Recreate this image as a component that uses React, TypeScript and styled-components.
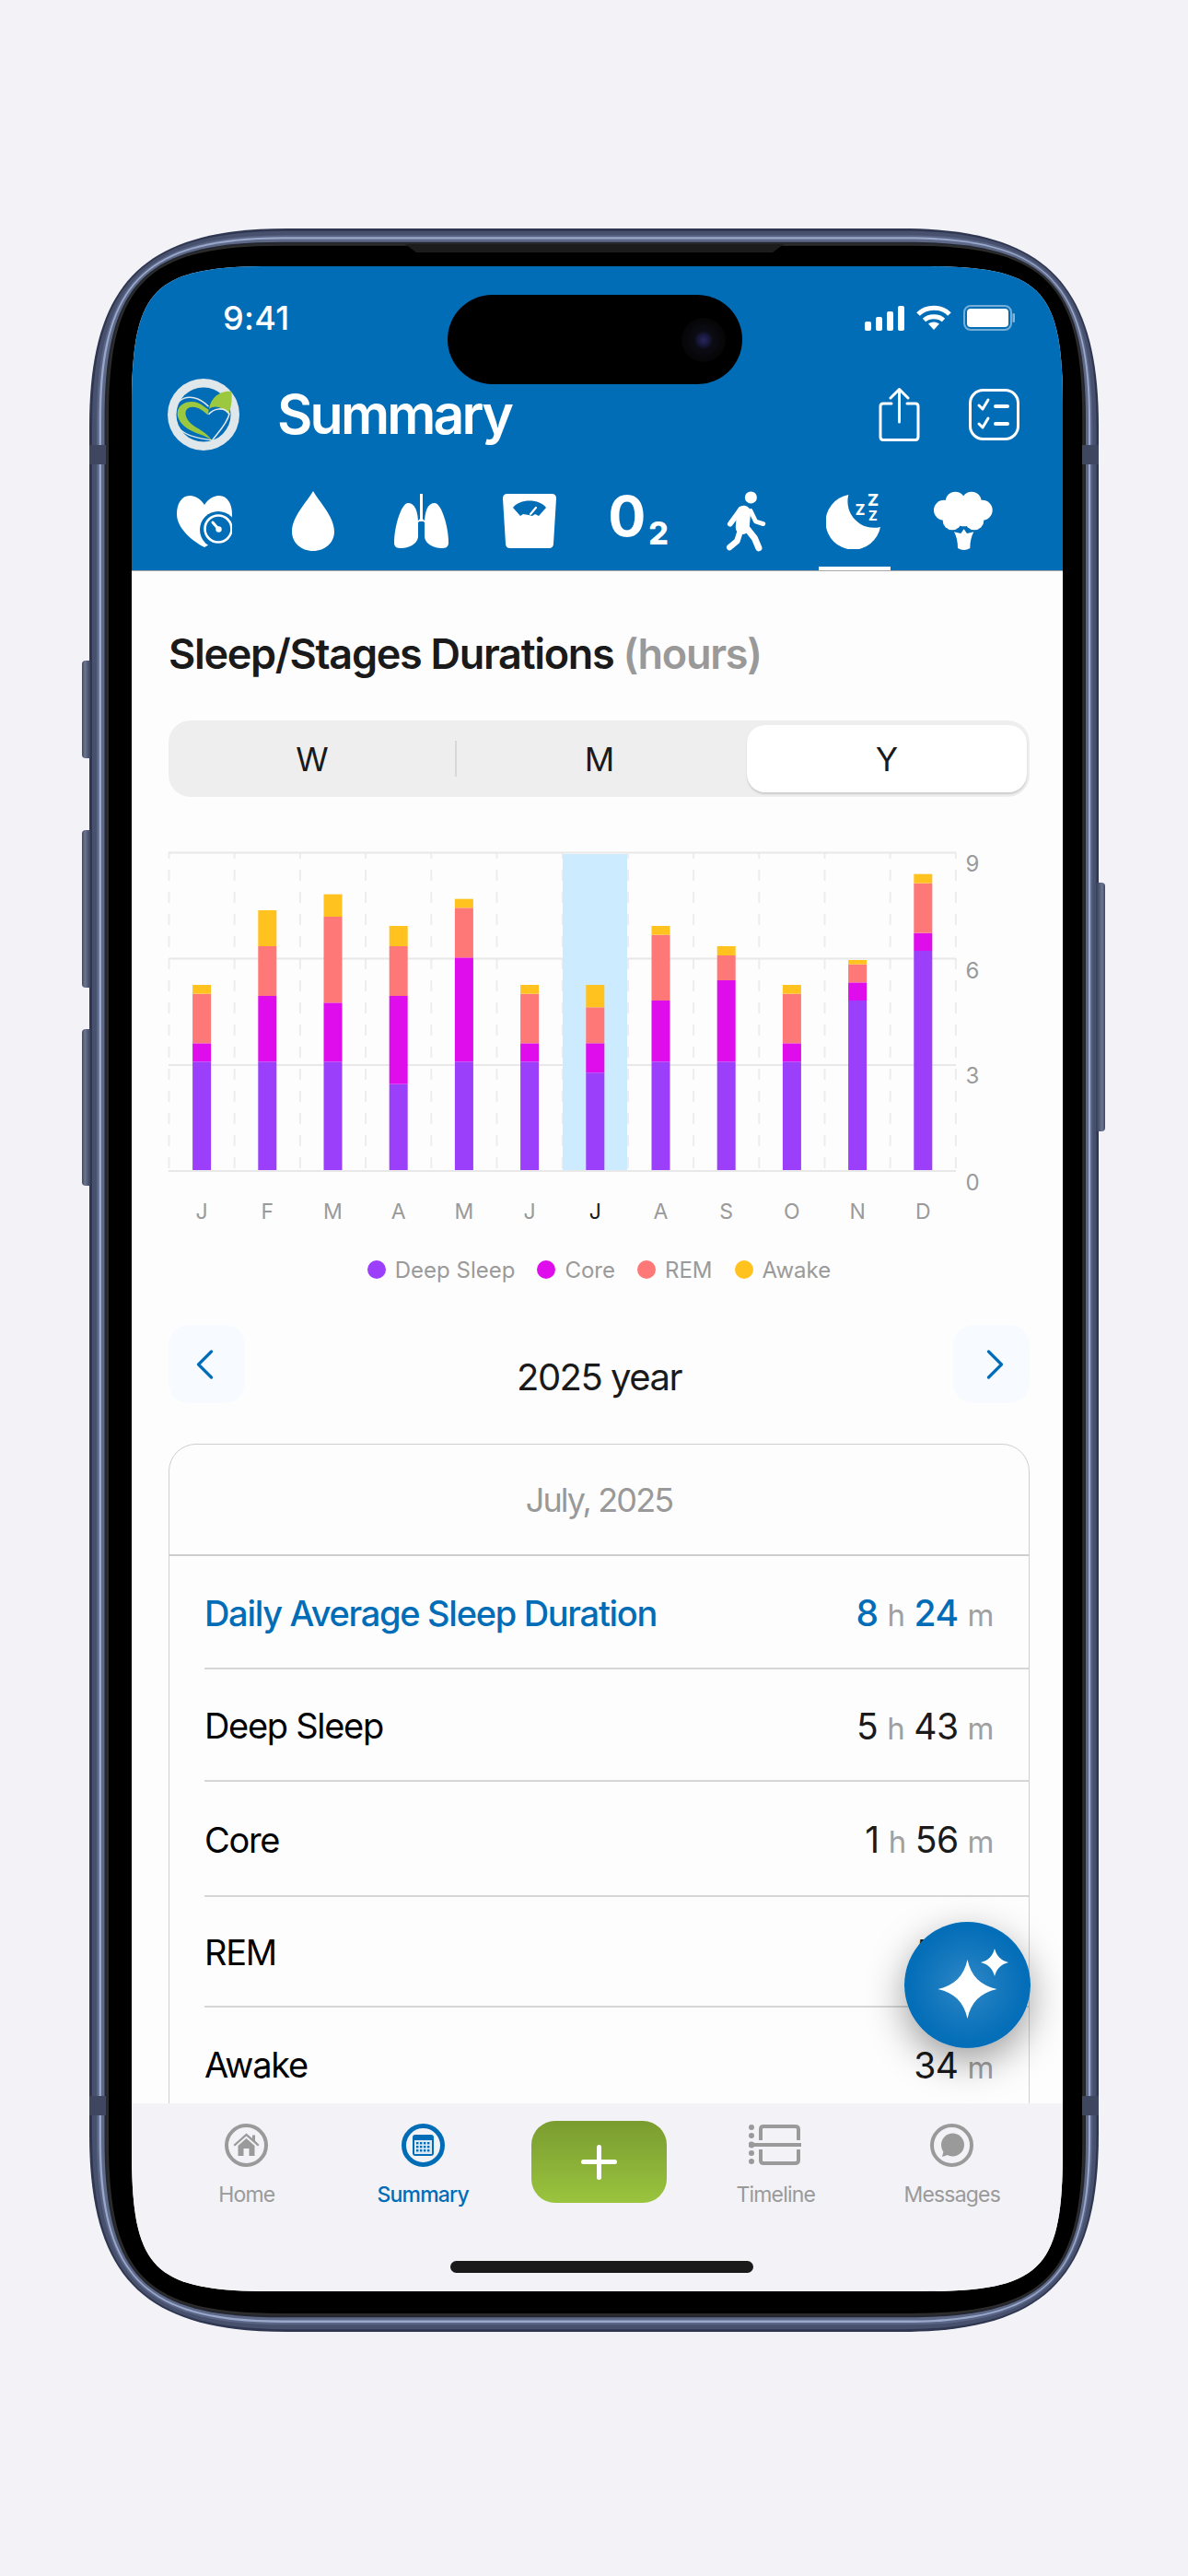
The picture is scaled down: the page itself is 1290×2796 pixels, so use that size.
import React from "react";
import styled, { createGlobalStyle } from "styled-components";

const BLUE = "#026DB7";
const FONT = `Inter, "Noto Sans", "Liberation Sans", sans-serif`;

const GlobalStyle = createGlobalStyle`
  html, body { margin: 0; padding: 0; background: #F2F2F7; }
  body { font-family: ${FONT}; }
  * { box-sizing: border-box; }
`;

function squircle(x: number, y: number, r: number, b: number, R: number, k: number) {
  const c = R * (1 - k);
  return `M${x} ${y + R}C${x} ${y + c} ${x + c} ${y} ${x + R} ${y}L${r - R} ${y}C${r - c} ${y} ${r} ${y + c} ${r} ${y + R}L${r} ${b - R}C${r} ${b - c} ${r - c} ${b} ${r - R} ${b}L${x + R} ${b}C${x + c} ${b} ${x} ${b - c} ${x} ${b - R}Z`;
}

const W = 1096, H = 2283;
const ring = (inset: number) => {
  const t = inset / 46;
  return squircle(46 * t, 41 * t, W - 39 * t, H - 44 * t, 215 - 62 * t, 0.726 + 0.124 * t);
};
const SCREEN_W = 1011, SCREEN_H = 2198;
const screenClip = squircle(0, 0, SCREEN_W, SCREEN_H, 153, 0.85);

const Page = styled.div`
  width: 1290px;
  height: 2796px;
  padding: 248px 0 0 97px;
  background: #F2F2F7;
  overflow: hidden;
`;
const Phone = styled.div`
  position: relative;
  width: ${W}px;
  height: ${H}px;
  padding: 41px 39px 44px 46px;
`;
const FrameArt = styled.svg`
  position: absolute;
  inset: 0;
`;
const SideButton = styled.div<{ $side: "left" | "right"; $top: number; $h: number }>`
  position: absolute;
  top: ${(p) => p.$top}px;
  height: ${(p) => p.$h}px;
  width: 9px;
  ${(p) => (p.$side === "left" ? "left: -8px; border-radius: 4px 0 0 4px;" : "right: -7px; border-radius: 0 4px 4px 0;")}
  background: linear-gradient(${(p) => (p.$side === "left" ? "90deg" : "270deg")}, #3f4762 0, #6c7691 35%, #3a425c 100%);
`;
const Band = styled.div<{ $side: "left" | "right"; $top: number }>`
  position: absolute;
  top: ${(p) => p.$top}px;
  ${(p) => (p.$side === "left" ? "left: 0;" : "right: 0;")}
  width: 18px;
  height: 21px;
  background: #3f4660;
`;
const Screen = styled.div`
  position: relative;
  width: ${SCREEN_W}px;
  height: ${SCREEN_H}px;
  clip-path: path("${screenClip}");
  background: #FDFDFD;
  display: flex;
  flex-direction: column;
`;
const Island = styled.div`
  position: absolute;
  left: 343px;
  top: 31px;
  width: 320px;
  height: 97px;
  border-radius: 49px;
  background: #000;
  display: flex;
  align-items: center;
  justify-content: flex-end;
  padding-right: 18px;
  z-index: 3;
`;
const Lens = styled.div`
  width: 48px;
  height: 48px;
  border-radius: 50%;
  background: radial-gradient(circle, #26265c 0, #17173a 18%, #0b0b14 30%, #070709 60%, #000 100%);
`;
const Header = styled.header`
  background: ${BLUE};
  flex: none;
  height: 330px;
  display: flex;
  flex-direction: column;
  box-shadow: 0 1px 0 #a9a9a9;
  z-index: 1;
`;
const StatusBar = styled.div`
  height: 40px;
  margin: 36px 0 46px;
  padding: 0 52px 0 99px;
  display: flex;
  align-items: center;
  justify-content: space-between;
`;
const Time = styled.span`
  color: #fff;
  font-size: 36px;
  font-weight: 500;
  letter-spacing: 0.3px;
`;
const StatusIcons = styled.div`
  display: flex;
  align-items: center;
  gap: 13px;
`;
const TitleRow = styled.div`
  height: 78px;
  padding: 0 47px 0 39px;
  display: flex;
  align-items: center;
  flex: none;
`;
const Title = styled.h1`
  margin: 0 0 0 41px;
  flex: 1;
  color: #fff;
  font-size: 59px;
  line-height: 78px;
  font-weight: 600;
  letter-spacing: -2.8px;
`;
const HeaderActions = styled.div`
  display: flex;
  align-items: center;
  gap: 53px;
`;
const TabRow = styled.nav`
  margin-top: 23px;
  height: 107px;
  padding-left: 20px;
  display: flex;
`;
const Tab = styled.div<{ $active?: boolean }>`
  position: relative;
  width: 117.7px;
  height: 107px;
  display: flex;
  align-items: center;
  justify-content: center;
  ${(p) =>
    p.$active &&
    `&::after { content: ""; position: absolute; left: 20px; right: 20px; bottom: 0; height: 4px; background: #fff; }`}
`;
const OxygenMark = styled.span`
  color: #fff;
  font-size: 61px;
  font-weight: 700;
  line-height: 1;
  display: flex;
  align-items: flex-start;
  margin: -5px 0 0 1px;
  sub {
    font-size: 34px;
    line-height: 1;
    font-weight: 800;
    margin: 32px 0 0 3px;
    vertical-align: baseline;
  }
`;
const MoonSvg = styled.svg`
  margin: 0 0 4px 5.7px;
`;
const Content = styled.main`
  flex: 1;
  min-height: 0;
  overflow: hidden;
  padding: 64px 36px 0 40px;
  background: #FDFDFD;
`;
const SectionTitle = styled.h2`
  margin: 0 0 45px;
  font-size: 45px;
  line-height: 54px;
  font-weight: 600;
  letter-spacing: -1.3px;
  color: #1a1a1a;
  white-space: nowrap;
`;
const SectionUnit = styled.span`
  color: #999;
`;
const Segments = styled.div`
  height: 83px;
  background: #EEEEEE;
  border-radius: 24px;
  display: grid;
  grid-template-columns: 312px 312px 1fr;
  padding: 5px 3px 5px 0;
`;
const Segment = styled.div<{ $active?: boolean; $divider?: boolean }>`
  position: relative;
  display: flex;
  align-items: center;
  justify-content: center;
  font-size: 36px;
  color: #1a1a1a;
  border-radius: 20px;
  ${(p) => p.$active && `margin-left: 4px; background: #fff; box-shadow: 0 2px 2px rgba(0,0,0,.14);`}
  ${(p) =>
    p.$divider &&
    `&::after { content: ""; position: absolute; right: -1px; top: 17px; bottom: 17px; width: 2px; background: #d8d8d8; }`}
`;
const ChartSvg = styled.svg`
  display: block;
  margin-top: 58px;
  overflow: visible;
`;
const AxisText = styled.text<{ $active?: boolean; $size: number }>`
  font-family: ${FONT};
  font-size: ${(p) => p.$size}px;
  fill: ${(p) => (p.$active ? "#1a1a1a" : "#9a9a9a")};
  text-anchor: middle;
  dominant-baseline: central;
`;
const Legend = styled.div`
  margin-top: 30px;
  height: 30px;
  display: flex;
  justify-content: center;
  gap: 24px;
`;
const LegendItem = styled.div`
  display: flex;
  align-items: center;
  gap: 10px;
  font-size: 24px;
  color: #9a9a9a;
`;
const Dot = styled.span<{ $color: string }>`
  width: 20px;
  height: 20px;
  border-radius: 50%;
  background: ${(p) => p.$color};
`;
const YearNav = styled.div`
  margin-top: 45px;
  height: 85px;
  display: flex;
  justify-content: space-between;
`;
const NavButton = styled.div<{ $dir: "l" | "r" }>`
  width: 83px;
  height: 85px;
  border-radius: 22px;
  background: #F7FBFF;
  display: flex;
  align-items: center;
  justify-content: center;
  ${(p) => (p.$dir === "l" ? "padding-right: 4px;" : "padding-left: 8px;")}
`;
const YearLabel = styled.div`
  align-self: flex-end;
  line-height: 60px;
  margin-bottom: -2px;
  font-size: 40px;
  letter-spacing: -1.5px;
  color: #1a1a1a;
`;
const Card = styled.section`
  margin-top: 44px;
  border: 1.5px solid #CFCFCF;
  border-radius: 30px;
  background: #FDFDFD;
`;
const CardHeader = styled.div`
  height: 120.5px;
  border-bottom: 2px solid #CFCFCF;
  display: flex;
  align-items: center;
  justify-content: center;
  padding-top: 2px;
  font-size: 36px;
  letter-spacing: -1.9px;
  color: #999;
`;
const Row = styled.div<{ $h: number }>`
  height: ${(p) => p.$h}px;
  margin-left: 38px;
  padding: 3px 38px 0 0;
  border-bottom: 2px solid #D6D6D6;
  display: flex;
  align-items: center;
  justify-content: space-between;
`;
const LastRow = styled(Row)`
  align-items: flex-start;
  padding-top: 39px;
  border-bottom: 0;
`;
const RowLabel = styled.span<{ $accent?: boolean }>`
  font-size: 38px;
  letter-spacing: -1.3px;
  font-weight: ${(p) => (p.$accent ? 500 : 400)};
  color: ${(p) => (p.$accent ? BLUE : "#000")};
`;
const RowValue = styled.span<{ $accent?: boolean }>`
  font-size: 39px;
  letter-spacing: -0.5px;
  font-weight: ${(p) => (p.$accent ? 500 : 400)};
  color: ${(p) => (p.$accent ? BLUE : "#1a1a1a")};
  display: flex;
  align-items: baseline;
`;
const Unit = styled.span`
  font-size: 33px;
  font-weight: 400;
  color: #a0a0a0;
  margin: 0 10px 0 10px;
  &:last-child { margin-right: 0; }
`;
const Fab = styled.button`
  position: absolute;
  right: 35px;
  bottom: 264px;
  width: 137px;
  height: 137px;
  border: 0;
  padding: 0;
  border-radius: 50%;
  background: radial-gradient(circle at 50% 50%, #3189C8 0, #1A7BBF 30%, #046EB8 65%, ${BLUE} 100%);
  box-shadow: 0 14px 42px rgba(0, 0, 0, 0.38);
  display: flex;
  align-items: center;
  justify-content: center;
  z-index: 2;
`;
const Footer = styled.footer`
  flex: none;
  height: 204px;
  background: #F2F2F7;
  display: flex;
  flex-direction: column;
  justify-content: space-between;
  padding: 19px 0 20px;
  z-index: 1;
`;
const FooterTabs = styled.div`
  display: grid;
  grid-template-columns: repeat(5, 191.5px);
  padding-left: 29px;
`;
const FooterTab = styled.div<{ $active?: boolean }>`
  display: flex;
  flex-direction: column;
  align-items: center;
  padding-top: 3px;
  font-size: 23px;
  letter-spacing: -0.8px;
  font-weight: ${(p) => (p.$active ? 500 : 400)};
  color: ${(p) => (p.$active ? BLUE : "#9a9a9a")};
`;
const FooterLabel = styled.span`
  margin-top: 15px;
  line-height: 30px;
`;
const AddButton = styled.div`
  justify-self: center;
  width: 147px;
  height: 89px;
  border-radius: 26px;
  background: linear-gradient(180deg, #7A9C30 0%, #9AC43E 100%);
  display: flex;
  align-items: center;
  justify-content: center;
`;
const PlusMark = styled.div`
  position: relative;
  width: 39px;
  height: 38px;
  &::before, &::after {
    content: "";
    position: absolute;
    background: #fff;
    border-radius: 3px;
  }
  &::before { left: 0; right: 0; top: 16.5px; height: 5px; }
  &::after { top: 0; bottom: 0; left: 17px; width: 5px; }
`;
const HomeIndicator = styled.div`
  align-self: center;
  margin-left: 10px;
  width: 329px;
  height: 13px;
  border-radius: 7px;
  background: #1a1a1a;
`;

const COLORS = { deep: "#9B3FFB", core: "#DF0CEC", rem: "#FF7878", awake: "#FFC21F" };
const Z0 = 1270;
const raw: [number, number, number, number][] = [
  [757, 697, 536, 507],
  [757, 543, 381, 264],
  [757, 565, 285, 212],
  [830, 543, 381, 315],
  [757, 418, 256, 227],
  [757, 697, 536, 507],
  [793, 697, 580, 507],
  [757, 558, 344, 315],
  [757, 492, 411, 381],
  [757, 697, 536, 507],
  [558, 499, 440, 426],
  [396, 338, 176, 146],
];
const MONTHS = ["J", "F", "M", "A", "M", "J", "J", "A", "S", "O", "N", "D"];
const X0 = 183.5;
const STEP = 71.2;
const toY = (z: number) => 900 + z / 3;

const Chart = () => (
  <ChartSvg width={935} height={410} viewBox="183 923 935 410" role="img">
    {Array.from({ length: 13 }).map((_, i) => (
      <line key={i} x1={X0 + i * STEP} x2={X0 + i * STEP} y1={926} y2={1270} stroke="#EDEDED" strokeWidth={2} strokeDasharray="12 12" strokeDashoffset={6} />
    ))}
    {[925.5, 1040.5, 1156, 1271].map((y) => (
      <line key={y} x1={183} x2={1038} y1={y} y2={y} stroke="#E8E8E8" strokeWidth={2} />
    ))}
    <rect x={611} y={927} width={70} height={343} fill="#CDEBFF" />
    {raw.map((b, i) => {
      const cx = X0 + (i + 0.5) * STEP;
      const x = cx - 10;
      const [d, c, r, a] = b.map(toY);
      return (
        <g key={i}>
          <rect x={x} y={d} width={20} height={Z0 - d} fill={COLORS.deep} />
          <rect x={x} y={c} width={20} height={d - c} fill={COLORS.core} />
          <rect x={x} y={r} width={20} height={c - r} fill={COLORS.rem} />
          <rect x={x} y={a} width={20} height={r - a} fill={COLORS.awake} />
          <AxisText x={cx} y={1315} $size={23} $active={i === 6}>{MONTHS[i]}</AxisText>
        </g>
      );
    })}
    {[["9", 937], ["6", 1053], ["3", 1167], ["0", 1283]].map(([t, y]) => (
      <AxisText key={t} x={1056} y={y as number} $size={24}>{t}</AxisText>
    ))}
  </ChartSvg>
);

const Logo = () => (
  <svg width={78} height={78} viewBox="306 543 235 235">
    <circle cx={423.5} cy={660.5} r={117.5} fill="#DFE7EA" />
    <circle cx={423.5} cy={660.5} r={89} fill={BLUE} />
    <path d="M338 655C340 625 375 612 405 622C420 628 432 640 441 645L437 662C420 645 395 628 372 640C358 650 365 675 385 692C400 705 430 715 452 745C425 725 390 722 365 702C350 690 337 672 338 655Z" fill="#9BC83F" />
    <path d="M442 642C445 610 475 580 515 585C518 610 514 640 505 660C490 640 465 625 442 642Z" fill="#9BC83F" />
    <path d="M342 618C372 592 412 605 440 634" fill="none" stroke="#DFE7EA" strokeWidth={5} />
    <path d="M440 660C455 642 490 632 508 658C500 692 470 720 452 745" fill="none" stroke="#DFE7EA" strokeWidth={5} />
    <path d="M340 700C360 730 400 735 452 745" fill="none" stroke="#DFE7EA" strokeWidth={4} />
  </svg>
);

const StatusGlyphs = () => (
  <StatusIcons>
    <svg width={43} height={27} viewBox="0 0 43 27" fill="#fff">
      <rect x={0} y={17} width={7} height={10} rx={2} />
      <rect x={12} y={12} width={7} height={15} rx={2} />
      <rect x={24} y={6} width={7} height={21} rx={2} />
      <rect x={36} y={0} width={7} height={27} rx={2} />
    </svg>
    <svg width={38} height={28} viewBox="0 0 38 28" fill="none" stroke="#fff" strokeWidth={5}>
      <path d="M2 10C11 1 27 1 36 10" />
      <path d="M8.5 16.5C14 11.5 24 11.5 29.5 16.5" />
      <path d="M19 27L13 20.5C16.5 17.8 21.5 17.8 25 20.5Z" fill="#fff" stroke="none" />
    </svg>
    <svg width={56} height={28} viewBox="0 0 56 28">
      <rect x={1} y={1} width={51} height={26} rx={7} fill="none" stroke="#fff" strokeOpacity={0.45} strokeWidth={2} />
      <rect x={4} y={4} width={45} height={20} rx={4} fill="#fff" />
      <rect x={53.5} y={9} width={2.5} height={10} rx={1.2} fill="#fff" fillOpacity={0.5} />
    </svg>
  </StatusIcons>
);

const ShareIcon = () => (
  <svg width={45} height={58} viewBox="0 0 45 58" fill="none" stroke="#fff" strokeWidth={3} strokeLinecap="round" strokeLinejoin="round">
    <path d="M14 17H5Q2 17 2 20V53Q2 56.5 5 56.5H40Q43 56.5 43 53V20Q43 17 40 17H31" />
    <path d="M22.5 37V2M13 11L22.5 1.5L32 11" />
  </svg>
);
const ChecklistIcon = () => (
  <svg width={55} height={56} viewBox="0 0 55 56" fill="none" stroke="#fff" strokeWidth={3} strokeLinecap="round" strokeLinejoin="round">
    <rect x={1.5} y={1.5} width={52} height={53} rx={14} />
    <path d="M11 18L15 22L21 12" />
    <path d="M11 38L15 42L21 32" />
    <path d="M29 19H42M29 38H42" strokeWidth={4} />
  </svg>
);

const HeartGauge = () => (
  <svg width={60} height={56} viewBox="0 0 60 56">
    <path d="M30 10C25 2 18 0 14 0C5 0 0 9 0 20C0 36 18 50 30 56C42 50 60 36 60 20C60 9 55 0 46 0C42 0 35 2 30 10Z" fill="#fff" />
    <circle cx={45} cy={37} r={20} fill={BLUE} />
    <circle cx={45} cy={36} r={14.5} fill="none" stroke="#fff" strokeWidth={2.6} />
    <path d="M39 29L45 36" stroke="#fff" strokeWidth={3} strokeLinecap="round" />
    <circle cx={45.5} cy={36.5} r={3.2} fill="#fff" />
  </svg>
);
const Drop = () => (
  <svg width={46} height={65} viewBox="0 0 46 65">
    <path d="M23 0C30 12 46 28 46 44C46 56 36 65 23 65C10 65 0 56 0 44C0 28 16 12 23 0Z" fill="#fff" />
  </svg>
);
const Lungs = () => (
  <svg width={59} height={59} viewBox="0 0 59 59" fill="#fff">
    <path d="M15 10C8 10 0 35 0 53C0 58 3 59 8 59C15 59 25 55 26 47V32C26 18 22 10 15 10Z" />
    <path d="M44 10C51 10 59 35 59 53C59 58 56 59 51 59C44 59 34 55 33 47V32C33 18 37 10 44 10Z" />
    <rect x={28} y={0} width={3} height={30} />
    <path d="M26 29L29.5 26L33 29V31L29.5 28.5L26 31Z" />
  </svg>
);
const ScaleIcon = () => (
  <svg width={58} height={59} viewBox="0 0 58 59">
    <path d="M5 0H53Q58 0 58 5L55 54Q55 59 50 59H8Q3 59 3 54L0 5Q0 0 5 0Z" fill="#fff" />
    <path d="M11 15C18 5 40 5 47 15L39 24L35 22L32 24L28 23L22 22L19 24Z" fill={BLUE} />
    <path d="M30 22L36 15" stroke="#fff" strokeWidth={2.2} strokeLinecap="round" />
  </svg>
);
const Walker = () => (
  <svg width={44} height={68} viewBox="262 128 135 204" fill="none" stroke="#fff" strokeLinecap="round" strokeLinejoin="round">
    <circle cx={346} cy={150} r={20} fill="#fff" stroke="none" />
    <path d="M322 200L318 250" strokeWidth={46} />
    <path d="M312 190L277 238" strokeWidth={18} />
    <path d="M345 195L362 230L387 238" strokeWidth={15} />
    <path d="M330 250L358 285L372 318" strokeWidth={22} />
    <path d="M308 270L300 295L275 316" strokeWidth={20} />
  </svg>
);
const Moon = () => (
  <MoonSvg width={66.7} height={65} viewBox="595 122 200 195">
    <path d="M668 140A90 90 0 1 0 772 245A86 86 0 0 1 668 140Z" fill="#fff" />
    <text x={730} y={177} fontFamily={FONT} fontWeight={800} fontSize={54} fill="#fff">Z</text>
    <text x={690} y={205} fontFamily={FONT} fontWeight={800} fontSize={47} fill="#fff">Z</text>
    <text x={733} y={225} fontFamily={FONT} fontWeight={800} fontSize={43} fill="#fff">Z</text>
  </MoonSvg>
);
const Broccoli = () => (
  <svg width={64} height={65} viewBox="942 130 192 195" fill="#fff">
    <circle cx={1012} cy={164} r={32} />
    <circle cx={1065} cy={164} r={32} />
    <circle cx={975} cy={192} r={33} />
    <circle cx={1100} cy={192} r={33} />
    <circle cx={1002} cy={226} r={31} />
    <circle cx={1040} cy={210} r={35} />
    <circle cx={1074} cy={226} r={31} />
    <path d="M1008 263L1030 268L1040 254L1050 268L1072 263Q1060 285 1060 316Q1040 328 1020 316Q1020 285 1008 263Z" />
  </svg>
);
const Chevron = ({ dir }: { dir: "l" | "r" }) => (
  <svg width={19} height={32} viewBox="0 0 19 32" fill="none" stroke={BLUE} strokeWidth={3.2} strokeLinecap="round" strokeLinejoin="round">
    <path d={dir === "l" ? "M16.5 2L2.5 16L16.5 30" : "M2.5 2L16.5 16L2.5 30"} />
  </svg>
);
const Sparkles = () => (
  <svg width={137} height={137} viewBox="0 0 137 137" fill="#fff">
    <path transform="translate(68.5 73)" d="M0 -32C4 -14 14 -4 32 0C14 4 4 14 0 32C-4 14 -14 4 -32 0C-14 -4 -4 -14 0 -32Z" />
    <path transform="translate(98 44)" d="M0 -15C2 -7 7 -2 15 0C7 2 2 7 0 15C-2 7 -7 2 -15 0C-7 -2 -2 -7 0 -15Z" />
  </svg>
);
const HomeGlyph = () => (
  <svg width={47} height={47} viewBox="0 0 47 47">
    <circle cx={23.5} cy={23.5} r={21.5} fill="none" stroke="#9a9a9a" strokeWidth={4} />
    <path d="M9.5 23L23.5 10.5L30 16V12.5H33V18.5L37.5 23L36 24.5L23.5 13.5L11 24.5Z" fill="#9a9a9a" />
    <path d="M14.5 24L23.5 16L32.5 24V35H26.5V27H20.5V35H14.5Z" fill="#9a9a9a" />
  </svg>
);
const SummaryGlyph = () => (
  <svg width={47} height={47} viewBox="0 0 47 47">
    <circle cx={23.5} cy={23.5} r={21} fill="none" stroke={BLUE} strokeWidth={5} />
    <rect x={12} y={12} width={23} height={23} rx={3} fill={BLUE} />
    <rect x={14} y={18} width={19} height={15} fill="#DCE9F4" />
    {[0, 1, 2].map((r) =>
      [0, 1, 2, 3].map((c) => (
        <rect key={`${r}${c}`} x={16 + c * 4} y={20 + r * 4} width={2.4} height={2.4} fill={BLUE} />
      ))
    )}
  </svg>
);
const TimelineGlyph = () => (
  <svg width={58} height={47} viewBox="0 0 58 47" fill="none" stroke="#9a9a9a" strokeWidth={4}>
    <g fill="#9a9a9a" stroke="none">
      <circle cx={3} cy={4} r={3} />
      <circle cx={3} cy={13} r={3} />
      <circle cx={3} cy={32} r={3} />
      <circle cx={3} cy={41} r={3} />
      <circle cx={3} cy={23} r={3.4} />
    </g>
    <path d="M13 18V6Q13 3 16 3H50Q54 3 54 6V18" />
    <path d="M13 28V40Q13 43 16 43H50Q54 43 54 40V28" />
    <path d="M3 23H57" />
  </svg>
);
const MessageGlyph = () => (
  <svg width={47} height={47} viewBox="0 0 47 47">
    <circle cx={23.5} cy={23.5} r={21.5} fill="none" stroke="#9a9a9a" strokeWidth={4} />
    <circle cx={24.5} cy={23} r={12.5} fill="#9a9a9a" />
    <path d="M15 28L13 36L22 33Z" fill="#9a9a9a" />
  </svg>
);

const RING_STOPS: [number, string][] = [
  [0, "#2F3650"],
  [3, "#47516E"],
  [8, "#5A6585"],
  [10.5, "#9AA8CC"],
  [13, "#5E6988"],
  [16.5, "#23262F"],
  [18.5, "#2C2C2C"],
  [21, "#000000"],
];

const ROWS = [
  { label: "Daily Average Sleep Duration", hr: "8", m: "24", accent: true, height: 123 },
  { label: "Deep Sleep", hr: "5", m: "43", height: 122 },
  { label: "Core", hr: "1", m: "56", height: 125 },
  { label: "REM", m: "55", height: 120 },
];

const Value = ({ hr, m, accent }: { hr?: string; m: string; accent?: boolean }) => (
  <RowValue $accent={accent}>
    {hr && <>{hr}<Unit>h</Unit></>}
    {m}<Unit>m</Unit>
  </RowValue>
);

export default function App() {
  return (
    <Page>
      <GlobalStyle />
      <Phone>
        <FrameArt width={W} height={H} viewBox={`0 0 ${W} ${H}`}>
          {RING_STOPS.map(([inset, color]) => (
            <path key={inset} d={ring(inset)} fill={color} />
          ))}
          <path d="M343 17H754L742 26H355Z" fill="#1C1C1C" />
        </FrameArt>
        <SideButton $side="left" $top={469} $h={106} />
        <SideButton $side="left" $top={653} $h={171} />
        <SideButton $side="left" $top={869} $h={170} />
        <SideButton $side="right" $top={710} $h={270} />
        <Band $side="left" $top={235} />
        <Band $side="right" $top={235} />
        <Band $side="left" $top={2027} />
        <Band $side="right" $top={2027} />
        <Screen>
          <Header>
            <StatusBar>
              <Time>9:41</Time>
              <StatusGlyphs />
            </StatusBar>
            <TitleRow>
              <Logo />
              <Title>Summary</Title>
              <HeaderActions>
                <ShareIcon />
                <ChecklistIcon />
              </HeaderActions>
            </TitleRow>
            <TabRow>
              <Tab><HeartGauge /></Tab>
              <Tab><Drop /></Tab>
              <Tab><Lungs /></Tab>
              <Tab><ScaleIcon /></Tab>
              <Tab><OxygenMark>0<sub>2</sub></OxygenMark></Tab>
              <Tab><Walker /></Tab>
              <Tab $active><Moon /></Tab>
              <Tab><Broccoli /></Tab>
            </TabRow>
          </Header>
          <Content>
            <SectionTitle>
              Sleep/Stages Durations <SectionUnit>(hours)</SectionUnit>
            </SectionTitle>
            <Segments>
              <Segment $divider>W</Segment>
              <Segment>M</Segment>
              <Segment $active>Y</Segment>
            </Segments>
            <Chart />
            <Legend>
              <LegendItem><Dot $color={COLORS.deep} />Deep Sleep</LegendItem>
              <LegendItem><Dot $color={COLORS.core} />Core</LegendItem>
              <LegendItem><Dot $color={COLORS.rem} />REM</LegendItem>
              <LegendItem><Dot $color={COLORS.awake} />Awake</LegendItem>
            </Legend>
            <YearNav>
              <NavButton $dir="l"><Chevron dir="l" /></NavButton>
              <YearLabel>2025 year</YearLabel>
              <NavButton $dir="r"><Chevron dir="r" /></NavButton>
            </YearNav>
            <Card>
              <CardHeader>July, 2025</CardHeader>
              {ROWS.map((r) => (
                <Row key={r.label} $h={r.height}>
                  <RowLabel $accent={r.accent}>{r.label}</RowLabel>
                  <Value hr={r.hr} m={r.m} accent={r.accent} />
                </Row>
              ))}
              <LastRow $h={160}>
                <RowLabel>Awake</RowLabel>
                <Value m="34" />
              </LastRow>
            </Card>
          </Content>
          <Fab aria-label="Assistant"><Sparkles /></Fab>
          <Footer>
            <FooterTabs>
              <FooterTab><HomeGlyph /><FooterLabel>Home</FooterLabel></FooterTab>
              <FooterTab $active><SummaryGlyph /><FooterLabel>Summary</FooterLabel></FooterTab>
              <AddButton><PlusMark /></AddButton>
              <FooterTab><TimelineGlyph /><FooterLabel>Timeline</FooterLabel></FooterTab>
              <FooterTab><MessageGlyph /><FooterLabel>Messages</FooterLabel></FooterTab>
            </FooterTabs>
            <HomeIndicator />
          </Footer>
          <Island><Lens /></Island>
        </Screen>
      </Phone>
    </Page>
  );
}
